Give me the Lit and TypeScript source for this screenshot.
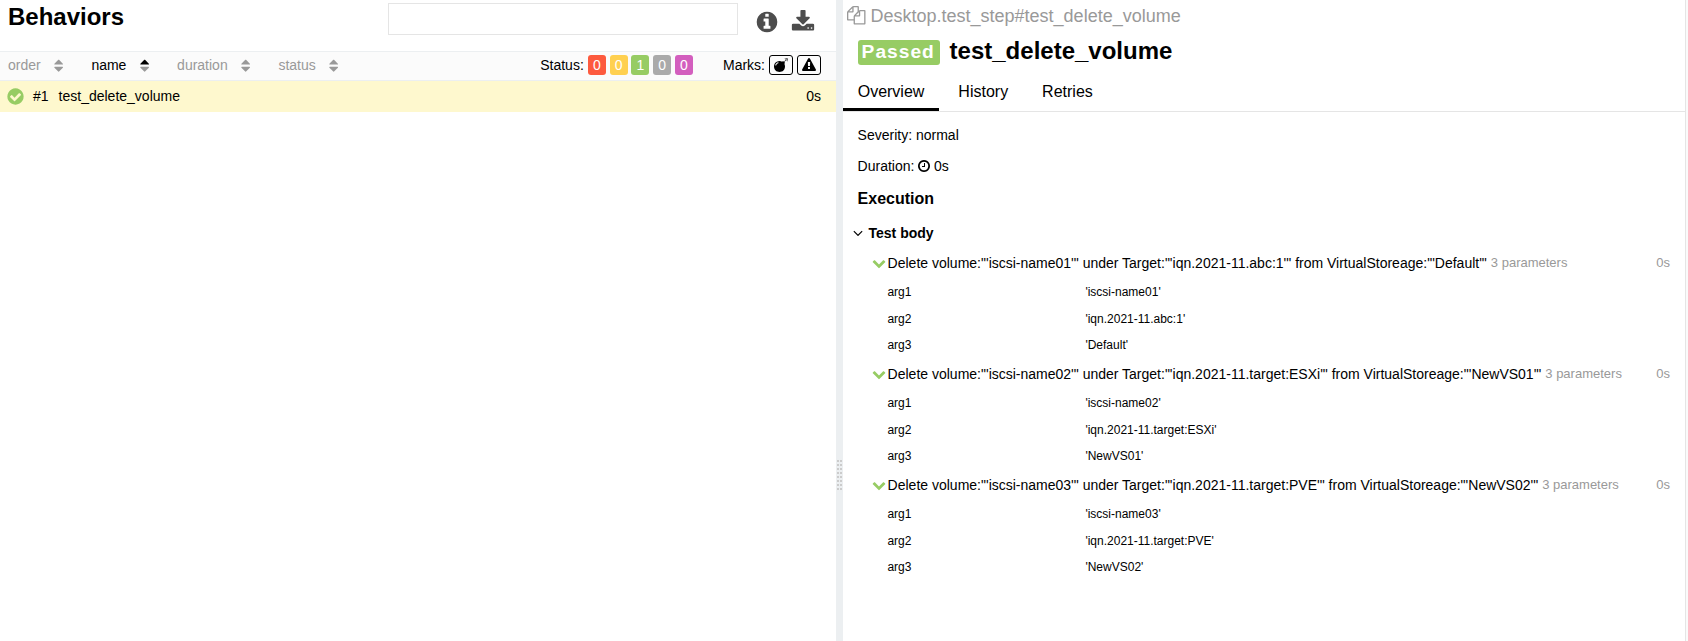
import { LitElement, html, svg, css } from "lit";
import { customElement } from "lit/decorators.js";
import { classMap } from "lit/directives/class-map.js";

const DISC =
  "m640 0q0 209-103 385.5t-279.5 279.5-385.5 103-385.5-103-279.5-279.5-103-385.5 103-385.5 279.5-279.5 385.5-103 385.5 103 279.5 279.5 103 385.5z";

const ICONS: Record<string, string> = {
  check:
    "M1412 734q0-28-18-46l-91-90q-19-19-45-19t-45 19l-408 407-226-226q-19-19-45-19t-45 19l-91 90q-18 18-18 46 0 27 18 45l362 362q19 19 45 19 27 0 46-19l543-543q18-18 18-45zm252 162q0 209-103 385.5t-279.5 279.5-385.5 103-385.5-103-279.5-279.5-103-385.5 103-385.5 279.5-279.5 385.5-103 385.5 103 279.5 279.5 103 385.5z",
  info:
    "M1152 1376v-160q0-14-9-23t-23-9h-96v-512q0-14-9-23t-23-9h-320q-14 0-23 9t-9 23v160q0 14 9 23t23 9h96v320h-96q-14 0-23 9t-9 23v160q0 14 9 23t23 9h448q14 0 23-9t9-23zm-128-896v-160q0-14-9-23t-23-9h-192q-14 0-23 9t-9 23v160q0 14 9 23t23 9h192q14 0 23-9t9-23zM1024 896" + DISC,
  download:
    "M1344 1344q0-26-19-45t-45-19-45 19-19 45 19 45 45 19 45-19 19-45zm256 0q0-26-19-45t-45-19-45 19-19 45 19 45 45 19 45-19 19-45zm128-224v320q0 40-28 68t-68 28h-1472q-40 0-68-28t-28-68v-320q0-40 28-68t68-28h465l135 136q58 56 136 56t136-56l136-136h464q40 0 68 28t28 68zm-325-569q17 41-14 70l-448 448q-18 19-45 19t-45-19l-448-448q-31-29-14-70 17-39 59-39h256v-448q0-26 19-45t45-19h256q26 0 45 19t19 45v448h256q42 0 59 39z",
  files:
    "M1696 384q40 0 68 28t28 68v1216q0 40-28 68t-68 28h-960q-40 0-68-28t-28-68v-288h-544q-40 0-68-28t-28-68v-672q0-40 20-88t48-76l408-408q28-28 76-48t88-20h416q40 0 68 28t28 68v328q68-40 128-40h416zm-544 213l-299 299h299v-299zm-640-384l-299 299h299v-299zm196 647l316-316v-416h-384v416q0 40-28 68t-68 28h-416v640h512v-256q0-40 20-88t48-76zm956 804v-1152h-384v416q0 40-28 68t-68 28h-416v640h896z",
  clock:
    "M1024 544v448q0 14-9 23t-23 9h-320q-14 0-23-9t-9-23v-64q0-14 9-23t23-9h224v-352q0-14 9-23t23-9h64q14 0 23 9t9 23zm416 352q0-148-73-273t-198-198-273-73-273 73-198 198-73 273 73 273 198 198 273 73 273-73 198-198 73-273zM1024 896" + DISC,
  angle:
    "M1395 736q0 13-10 23l-466 466q-10 10-23 10t-23-10l-466-466q-10-10-10-23t10-23l50-50q10-10 23-10t23 10l393 393 393-393q10-10 23-10t23 10l50 50q10 10 10 23z",
  chevron:
    "M1683 808l-742 741q-19 19-45 19t-45-19l-742-741q-19-19-19-45.5t19-45.5l166-165q19-19 45-19t45 19l531 531 531-531q19-19 45-19t45 19l166 165q19 19 19 45.5t-19 45.5z",
  bomb:
    "M571 589q-10-25-34-35t-49 0q-108 44-191 127t-127 191q-10 25 0 49t35 34q13 5 24 5 42 0 60-40 34-84 98.5-148.5t148.5-98.5q25-11 35-35t0-49zm942-356l46 46-244 243 68 68q19 19 19 45.5t-19 45.5l-64 64q89 161 89 343 0 143-55.5 273.5t-150 225-225 150-273.5 55.5-273.5-55.5-225-150-150-225-55.5-273.5 55.5-273.5 150-225 225-150 273.5-55.5q182 0 343 89l64-64q19-19 45.5-19t45.5 19l68 68zm8-56q-10 10-22 10-13 0-23-10l-91-90q-9-10-9-23t9-23q10-9 23-9t23 9l90 91q10 9 10 22.5t-10 22.5zm230 230q-11 9-23 9t-23-9l-90-91q-10-9-10-22.5t10-22.5q9-10 22.5-10t22.5 10l91 90q9 10 9 23t-9 23zm41-183q0 14-9 23t-23 9h-96q-14 0-23-9t-9-23 9-23 23-9h96q14 0 23 9t9 23zm-192-192v96q0 14-9 23t-23 9-23-9-9-23v-96q0-14 9-23t23-9 23 9 9 23zm151 55l-91 90q-10 10-22 10-13 0-23-10-10-9-10-22.5t10-22.5l90-91q10-9 23-9t23 9q9 10 9 23t-9 23z",
  warning:
    "M1024 1375v-190q0-14-9.5-23.5t-22.5-9.5h-192q-13 0-22.5 9.5t-9.5 23.5v190q0 14 9.5 23.5t22.5 9.5h192q13 0 22.5-9.5t9.5-23.5zm-2-374l18-459q0-12-10-19-13-11-24-11h-220q-11 0-24 11-10 7-10 21l17 457q0 10 10 16.5t24 6.5h185q14 0 23.5-6.5t10.5-16.5zm-14-934l768 1408q35 63-2 126-17 29-46.5 46t-63.5 17h-1536q-34 0-63.5-17t-46.5-46q-37-63-2-126l768-1408q17-31 47-49t65-18 65 18 47 49z",
};

const SORT_DOWN = "M1408 1088q0 26-19 45l-448 448q-19 19-45 19t-45-19l-448-448q-19-19-19-45t19-45 45-19h896q26 0 45 19t19 45z";
const SORT_UP = "M1408 704q0 26-19 45t-45 19h-896q-26 0-45-19t-19-45 19-45l448-448q19-19 45-19t45 19l448 448q19 19 19 45z";

const icon = (name: string, cls: string) =>
  html`<svg class="icon ${cls}" viewBox="0 0 1792 1792">${svg`<path d=${ICONS[name]}></path>`}</svg>`;

const SORTERS = [
  { name: "order", active: false },
  { name: "name", active: true },
  { name: "duration", active: false },
  { name: "status", active: false },
];

const STATUSES = [
  { kind: "failed", count: 0 },
  { kind: "broken", count: 0 },
  { kind: "passed", count: 1 },
  { kind: "skipped", count: 0 },
  { kind: "unknown", count: 0 },
];

const STEPS = [
  ["iscsi-name01", "iqn.2021-11.abc:1", "Default"],
  ["iscsi-name02", "iqn.2021-11.target:ESXi", "NewVS01"],
  ["iscsi-name03", "iqn.2021-11.target:PVE", "NewVS02"],
];

@customElement("behaviors-tree")
class BehaviorsTree extends LitElement {
  static styles = css`
    :host { display: flex; flex-direction: column; background: #fff; }
    .icon { display: block; fill: currentColor; flex: none; }
    .head { display: flex; align-items: flex-start; height: 51px; }
    .title { margin: 0; padding: 3px 0 0 8px; width: 388px; font-size: 24px; line-height: 27px; box-sizing: border-box; height: 34px; }
    .search { box-sizing: border-box; width: 350px; height: 32px; margin: 3px 0 0; padding: 0 8px; border: 1px solid #e5e5e5; border-radius: 0; outline: none; }
    .actions { display: flex; gap: 11.5px; margin: 10px 0 0 17px; color: #4d4d4d; }
    .big { width: 24px; height: 24px; }
    .bar { display: flex; align-items: center; height: 28px; border-top: 1px solid #eceff1; border-bottom: 1px solid #eceff1; background: #fbfbfb; padding: 0 15px 0 8px; }
    .sorter { display: flex; align-items: center; height: 28px; color: #999; line-height: 26px; margin-right: 25px; }
    .sorter span { height: 28px; }
    .sorter.active { color: #000; }
    .sort { width: 15.3px; height: 15.3px; margin-left: 10.4px; }
    .dim { fill: #999; }
    .status { display: flex; align-items: center; margin-left: auto; height: 26px; padding-bottom: 2px; }
    .badges { display: flex; gap: 3.8px; margin-left: 4px; }
    .badge { width: 18px; height: 20px; line-height: 20px; text-align: center; color: #fff; border-radius: 3px; }
    .failed { background: #fd5a3e; }
    .broken { background: #ffd050; }
    .passed { background: #97cc64; }
    .skipped { background: #aaa; }
    .unknown { background: #d35ebe; }
    .marks { display: flex; align-items: center; margin-left: 30px; height: 26px; padding-bottom: 2px; }
    .mark { box-sizing: border-box; width: 24px; height: 20px; border: 1px solid #000; border-radius: 3px; margin-left: 4px; display: flex; align-items: center; justify-content: center; }
    .m { width: 14px; height: 14px; }
    .row { display: flex; align-items: center; height: 31px; background: #fef8ce; padding: 0 15px 0 6px; line-height: 31px; }
    .check { width: 19px; height: 19px; color: #97cc64; margin-right: 8px; }
    .num { margin-right: 10px; }
    .time { margin-left: auto; }
  `;
  render() {
    return html`
      <div class="head">
        <h2 class="title">Behaviors</h2>
        <input class="search" aria-label="Search" />
        <div class="actions">${icon("info", "big")}${icon("download", "big")}</div>
      </div>
      <div class="bar">
        ${SORTERS.map(
          (s) => html`<div class=${classMap({ sorter: true, active: s.active })}>
            <span>${s.name}</span>
            <svg class="icon sort" viewBox="0 0 1792 1792"><path d=${SORT_UP}></path><path class="dim" d=${SORT_DOWN}></path></svg>
          </div>`
        )}
        <div class="status">
          <span>Status:</span>
          <div class="badges">${STATUSES.map((s) => html`<span class="badge ${s.kind}">${s.count}</span>`)}</div>
        </div>
        <div class="marks">
          <span>Marks:</span>
          <span class="mark">${icon("bomb", "m")}</span>
          <span class="mark">${icon("warning", "m")}</span>
        </div>
      </div>
      <div class="row">
        ${icon("check", "check")}
        <span class="num">#1</span><span>test_delete_volume</span><span class="time">0s</span>
      </div>
    `;
  }
}

@customElement("test-result")
class TestResult extends LitElement {
  static styles = css`
    :host { display: block; background: #fff; }
    .icon { display: block; fill: currentColor; flex: none; }
    .path { display: flex; align-items: center; height: 20px; padding: 6px 0 0 4px; font-size: 18px; line-height: 20px; color: #999; }
    .files { width: 18.5px; height: 18.5px; margin: 0 5px 1px 0; }
    .title { display: flex; align-items: center; margin: 0; padding: 14px 0 0 14.6px; font-size: 24px; line-height: 22px; height: 25px; }
    .name { padding-bottom: 3px; }
    .label { box-sizing: border-box; height: 25px; width: 82px; padding-left: 4px; border-radius: 3px; background: #97cc64; color: #fff; font-size: 19.2px; line-height: 24px; letter-spacing: 1px; margin-right: 10px; }
    .tabs { display: flex; height: 46px; border-bottom: 1px solid #e5e5e5; font-size: 16px; }
    .tab { box-sizing: border-box; height: 46px; padding: 18px 14.7px 0; margin-right: 4.6px; line-height: 18px; border-bottom: 3px solid transparent; }
    .tab.on { border-color: #000; }
    .line { display: flex; align-items: center; height: 31px; padding-left: 14.6px; }
    .severity { padding-top: 7px; }
    .clock { width: 14px; height: 14px; margin: 0 2.6px 0 3px; }
    .h3 { margin: 0; padding: 9px 0 0 14.6px; font-size: 16px; line-height: 18px; }
    .group { display: flex; align-items: center; padding: 15px 0 0 7px; height: 20px; font-weight: bold; }
    .angle { width: 16px; height: 16px; margin-right: 2.5px; }
    .steps { padding-top: 4px; }
    .step { height: 111px; padding: 0 15px 0 29px; }
    .head { display: flex; align-items: center; height: 32px; }
    .chev { width: 14px; height: 14px; color: #97cc64; margin-right: 1.6px; }
    .count { color: #999; font-size: 13px; margin: -2px 0 0 4px; }
    .dur { color: #999; font-size: 13px; margin: -2px 0 0 auto; }
    .args { display: grid; grid-template-columns: 198px 1fr; grid-auto-rows: 26.7px; padding-left: 15.4px; font-size: 12px; line-height: 26px; }
  `;
  render() {
    return html`
      <div class="path">${icon("files", "files")}<span>Desktop.test_step#test_delete_volume</span></div>
      <h2 class="title"><span class="label">Passed</span><span class="name">test_delete_volume</span></h2>
      <div class="tabs">
        <span class="tab on">Overview</span><span class="tab">History</span><span class="tab">Retries</span>
      </div>
      <div class="line severity">Severity: normal</div>
      <div class="line"><span>Duration:</span>${icon("clock", "clock")}<span>0s</span></div>
      <h3 class="h3">Execution</h3>
      <div class="group">${icon("angle", "angle")}<span>Test body</span></div>
      <div class="steps">
        ${STEPS.map(
          (a) => html`<div class="step">
            <div class="head">
              ${icon("chevron", "chev")}
              <span>Delete volume:"'${a[0]}'" under Target:"'${a[1]}'" from VirtualStoreage:"'${a[2]}'"</span>
              <span class="count">3 parameters</span><span class="dur">0s</span>
            </div>
            <div class="args">${a.map((v, i) => html`<span>arg${i + 1}</span><span>'${v}'</span>`)}</div>
          </div>`
        )}
      </div>
    `;
  }
}

@customElement("app-root")
class AppRoot extends LitElement {
  static styles = css`
    :host { display: flex; box-sizing: border-box; width: 1688px; height: 641px; overflow: hidden; background: #fff; color: #000; font: 14px "Liberation Sans", Arial, sans-serif; }
    .left { width: 836px; flex: none; }
    .gutter { width: 7px; flex: none; background: #eceff1; display: flex; align-items: center; }
    .grip { display: grid; grid-template-columns: 2px 2px; grid-auto-rows: 2px; column-gap: 1px; row-gap: 2px; margin: 309px 0 0 1px; }
    .dot { background: #ccc; }
    .right { width: 842px; flex: none; border-right: 1px solid #e5e5e5; }
    .edge { flex: 1; background: #fafafa; }
  `;
  render() {
    return html`
      <behaviors-tree class="left"></behaviors-tree>
      <div class="gutter"><div class="grip">${Array.from({ length: 16 }, () => html`<span class="dot"></span>`)}</div></div>
      <test-result class="right"></test-result>
      <div class="edge"></div>
    `;
  }
}
